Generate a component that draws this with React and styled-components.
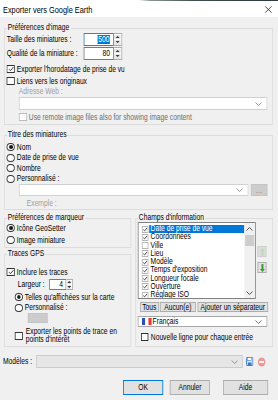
import React from 'react';
import styled, { createGlobalStyle } from 'styled-components';

/* The dialog is drawn in a horizontally condensed form (like the reference screenshot):
   layout is written in reference pixels and converted with u(), then the window is scaled by S. */
const S = 0.82;
const u = v => +(v / S).toFixed(3);

const FONT = `"Liberation Sans", Arial, sans-serif`;

const Global = createGlobalStyle`
  * { box-sizing: border-box; }
  html, body { margin: 0; padding: 0; background: #f0f0f0; overflow: hidden; }
  body { font-family: ${FONT}; font-size: 8.2px; color: #000; }
`;

const Window = styled.div`
  width: ${u(278)}px; height: 400px; display: flex; flex-direction: column;
  background: #f0f0f0; overflow: hidden;
  transform: scaleX(${S}); transform-origin: 0 0;
`;

const TopEdge = styled.div`
  height: 1px; flex: none;
  background: linear-gradient(to right, #ffffff 0%, #ffffff 50%, #8a9896 54%, #3e4c4c 70%, #2c383c 100%);
`;

const TitleBar = styled.div`
  height: 16px; flex: none; background: #fff;
  display: flex; align-items: center; justify-content: space-between;
  padding: 1px ${u(6)}px 0 ${u(3)}px; font-size: 9px; white-space: nowrap;
`;

const Body = styled.div`
  flex: 1; display: flex; flex-direction: column; padding: 0 ${u(5)}px 0 ${u(4)}px;
`;

const Group = styled.fieldset`
  margin: ${p => p.$mt || 0}px 0 0 0;
  padding: ${p => p.$pt || 0}px ${u(2)}px ${p => p.$pb || 0}px ${u(2)}px;
  border: 1px solid #dcdcdc;
  min-width: 0;
  display: flex; flex-direction: column;
  flex: ${p => (p.$grow ? '1 1 auto' : 'none')};
`;

const Legend = styled.legend`
  padding: 0 ${u(1)}px; margin: 0; height: 10px; line-height: 10px; white-space: nowrap;
`;

const Row = styled.div`
  display: flex; align-items: center; flex: none; white-space: nowrap;
  height: ${p => p.$h || 10}px;
  margin-top: ${p => p.$mt || 0}px;
  margin-left: ${p => u(p.$ml || 0)}px;
  margin-right: ${p => u(p.$mr || 0)}px;
  width: ${p => (p.$w ? `${u(p.$w)}px` : 'auto')};
  overflow: ${p => (p.$w ? 'hidden' : 'visible')};
  justify-content: ${p => p.$justify || 'flex-start'};
  color: ${p => p.$color || '#000'};
`;

const Columns = styled.div`
  display: flex; gap: ${u(4)}px; margin-top: ${p => p.$mt || 0}px; flex: none;
`;

const Column = styled.div`
  display: flex; flex-direction: column; width: ${p => u(p.$w)}px; flex: none;
`;

const FieldLabel = styled.span`
  width: ${p => u(p.$w)}px; flex: none;
  margin-left: ${p => u(p.$ml || 0)}px;
`;

const SpinWrap = styled.div`
  display: flex; height: 100%; width: ${p => u(p.$w)}px; flex: none;
`;

const SpinInput = styled.div`
  flex: 1; background: #fff;
  border: 1px solid ${p => (p.$focus ? '#3c7fc4' : '#7a7a7a')};
  display: flex; align-items: center; justify-content: flex-end; padding-right: ${u(3)}px;
`;

const Selected = styled.span`
  background: #0078d7; color: #fff; padding: 0 ${u(0.5)}px; line-height: 9px;
`;

const SpinButtons = styled.div`
  width: ${p => u(p.$w || 8)}px; flex: none; display: flex; flex-direction: column; gap: 1px;
  border: 1px solid #adadad; border-left: none; background: #fff; padding: 0.5px ${u(0.5)}px;
`;

const SpinHalf = styled.div`
  flex: 1; background: #e6e6e6; display: flex; align-items: center; justify-content: center;
`;

const Box = styled.span`
  width: ${p => u(p.$s || 8)}px; height: ${p => p.$s || 8}px; flex: none;
  border: 1px solid ${p => p.$bc || '#333'};
  background: #fff; display: inline-flex; align-items: center; justify-content: center;
  margin-right: ${p => u(p.$gap === undefined ? 2 : p.$gap)}px;
`;

const Round = styled.span`
  width: ${u(8)}px; height: 8px; flex: none; border-radius: 50%;
  border: 1px solid #333; background: #fff;
  display: inline-flex; align-items: center; justify-content: center; margin-right: ${u(2)}px;
`;

const Dot = styled.span`
  width: ${u(4)}px; height: 4px; border-radius: 50%; background: #1a1a1a;
`;

const Combo = styled.div`
  flex: ${p => (p.$w ? 'none' : '1')};
  width: ${p => (p.$w ? `${u(p.$w)}px` : 'auto')};
  height: 100%;
  background: ${p => p.$bg || '#fff'};
  border: 1px solid ${p => p.$bc || '#d0d0d0'};
  display: flex; align-items: center; justify-content: space-between;
  padding: 0 ${u(4)}px 0 ${u(3)}px;
`;

const ComboValue = styled.span`
  display: flex; align-items: center; gap: ${u(1)}px;
`;

const SmallBtn = styled.div`
  width: ${p => u(p.$w)}px; height: ${p => p.$h || 12}px; flex: none;
  margin-left: ${p => u(p.$ml || 0)}px;
  margin-right: ${p => u(p.$mr || 0)}px;
  background: ${p => p.$bg || '#e1e1e1'};
  border: 1px solid ${p => p.$bc || '#adadad'};
  color: ${p => p.$color || '#000'};
  display: flex; align-items: center; justify-content: center; white-space: nowrap;
  letter-spacing: ${p => p.$ls || 0}px;
`;

const Swatch = styled.div`
  width: ${u(20)}px; height: 10px; flex: none; margin-left: ${u(21)}px;
  background: #cccccc; border: 1px solid #c4c4c4;
`;

const WrapText = styled.span`
  white-space: normal; line-height: 8px; width: ${p => u(p.$w)}px;
`;

const ListRow = styled.div`
  display: flex; flex: none; margin-top: -1px;
`;

const ListBox = styled.div`
  width: ${u(118)}px; height: 77px; background: #fff; border: 1px solid #828282;
  display: flex; overflow: hidden; flex: none;
`;

const ListItems = styled.div`
  flex: 1; padding: 2px 0 0 ${u(3)}px; display: flex; flex-direction: column; min-width: 0;
`;

const ListItem = styled.div`
  height: 8.25px; display: flex; align-items: center; flex: none; white-space: nowrap;
`;

const ItemText = styled.span`
  flex: 1; height: 100%; line-height: 8.25px; margin-left: ${u(1)}px; padding: 0 ${u(1)}px;
  background: ${p => (p.$sel ? '#0078d7' : 'transparent')};
  color: ${p => (p.$sel ? '#fff' : '#000')};
`;

const ScrollBar = styled.div`
  width: ${u(11)}px; flex: none; background: #f0f0f0; display: flex; flex-direction: column;
`;

const ScrollArrow = styled.div`
  height: 11px; flex: none; display: flex; align-items: center; justify-content: center;
`;

const Thumb = styled.div`
  height: 11px; margin: 1px ${u(1)}px 0 ${u(1)}px; background: #cdcdcd; flex: none;
`;

const ScrollSpace = styled.div`
  flex: 1;
`;

const SideButtons = styled.div`
  display: flex; flex-direction: column; margin-left: ${u(2)}px; padding-top: 24px; gap: 5px;
`;

const ArrowBtn = styled.div`
  width: ${u(9)}px; height: 11px; display: flex; align-items: center; justify-content: center;
  background: ${p => (p.$disabled ? '#dcdcdc' : '#e1e1e1')};
  border: 1px solid ${p => (p.$disabled ? '#cfcfcf' : '#adadad')};
`;

/* svg helper: drawn at reference size, widened so the window scale brings it back */
const Icon = ({ w, h, children }) => (
  <svg width={u(w)} height={h} viewBox={`0 0 ${w} ${h}`} preserveAspectRatio="none">
    {children}
  </svg>
);

const Chevron = ({ up, color = '#606060' }) => (
  <Icon w={7} h={4}>
    <path d={up ? 'M0.5 3.5 L3.5 0.5 L6.5 3.5' : 'M0.5 0.5 L3.5 3.5 L6.5 0.5'} stroke={color} strokeWidth="0.9" fill="none" />
  </Icon>
);

const Tri = ({ up }) => (
  <Icon w={4} h={2}>
    <path d={up ? 'M0 2 L2 0 L4 2Z' : 'M0 0 L4 0 L2 2Z'} fill="#333" />
  </Icon>
);

const Check = ({ size = 6, color = '#222' }) => (
  <Icon w={size} h={size}>
    <path
      d={`M${size * 0.12} ${size * 0.52} L${size * 0.38} ${size * 0.78} L${size * 0.88} ${size * 0.18}`}
      stroke={color} strokeWidth="0.9" fill="none"
    />
  </Icon>
);

const CheckBox = ({ checked, bc, ...rest }) => (
  <Box $bc={bc} {...rest}>{checked && <Check />}</Box>
);

const Radio = ({ checked }) => <Round>{checked && <Dot />}</Round>;

const Spin = ({ w, bw, value, focus }) => (
  <SpinWrap $w={w}>
    <SpinInput $focus={focus}>{focus ? <Selected>{value}</Selected> : value}</SpinInput>
    <SpinButtons $w={bw}>
      <SpinHalf><Tri up /></SpinHalf>
      <SpinHalf><Tri /></SpinHalf>
    </SpinButtons>
  </SpinWrap>
);

const GreenArrow = ({ up, color }) => (
  <Icon w={5} h={8}>
    {up ? (
      <path d="M2.5 0 L5 3 L3.5 3 L3.5 8 L1.5 8 L1.5 3 L0 3Z" fill={color} />
    ) : (
      <path d="M2.5 8 L5 5 L3.5 5 L3.5 0 L1.5 0 L1.5 5 L0 5Z" fill={color} />
    )}
  </Icon>
);

const Flag = () => (
  <Icon w={10} h={7}>
    <rect x="0" y="0" width="3.4" height="7" fill="#2b4fb5" />
    <rect x="3.4" y="0" width="3.2" height="7" fill="#ffffff" />
    <rect x="6.6" y="0" width="3.4" height="7" fill="#e8383d" />
  </Icon>
);

const SaveIcon = () => (
  <Icon w={9} h={9}>
    <rect x="0.5" y="0.5" width="8" height="8" rx="0.8" fill="#d6e6f7" stroke="#3b76c4" />
    <rect x="2" y="0.5" width="5" height="3" fill="#ffffff" stroke="#3b76c4" strokeWidth="0.6" />
    <rect x="2.2" y="5.5" width="4.6" height="3" fill="#3b76c4" />
  </Icon>
);

const DeleteIcon = () => (
  <Icon w={10} h={10}>
    <circle cx="5" cy="5" r="4.6" fill="#eb9a9a" />
    <rect x="2.2" y="4.1" width="5.6" height="1.8" fill="#ffffff" />
  </Icon>
);

const CloseIcon = () => (
  <Icon w={7} h={7}>
    <path d="M0.3 0.3 L6.7 6.7 M6.7 0.3 L0.3 6.7" stroke="#222" strokeWidth="0.8" />
  </Icon>
);

const fields = [
  ['Date de prise de vue', true, true],
  ['Coordonnées', true],
  ['Ville', false],
  ['Lieu', true],
  ['Modèle', true],
  ["Temps d'exposition", true],
  ['Longueur focale', true],
  ['Ouverture', true],
  ['Réglage ISO', true],
];

export default function App() {
  return (
    <Window>
      <Global />
      <TopEdge />
      <TitleBar>
        <span>Exporter vers Google Earth</span>
        <CloseIcon />
      </TitleBar>
      <Body>
        <Group $mt={6} $pb={2}>
          <Legend>Préférences d'image</Legend>
          <Row $h={13}>
            <FieldLabel $w={77}>Taille des miniatures :</FieldLabel>
            <Spin w={38} value="500" focus />
          </Row>
          <Row $h={13} $mt={1}>
            <FieldLabel $w={77}>Qualité de la miniature :</FieldLabel>
            <Spin w={38} value="80" />
          </Row>
          <Row $mt={4} $w={118}>
            <CheckBox checked />
            Exporter l'horodatage de prise de vue
          </Row>
          <Row $mt={2}>
            <CheckBox />
            Liens vers les originaux
          </Row>
          <Row $ml={12} $color="#a0a0a0">Adresse Web :</Row>
          <Row $h={13} $mt={1} $ml={12} $mr={3}>
            <Combo>
              <span />
              <Chevron color="#8a8a8a" />
            </Combo>
          </Row>
          <Row $mt={2} $ml={12} $color="#6d6d6d">
            <CheckBox bc="#bcbcbc" />
            Use remote image files also for showing image content
          </Row>
        </Group>

        <Group $mt={5} $pt={2} $pb={1}>
          <Legend>Titre des miniatures</Legend>
          <Row $h={10.5}><Radio checked />Nom</Row>
          <Row $h={10.5}><Radio />Date de prise de vue</Row>
          <Row $h={10.5}><Radio />Nombre</Row>
          <Row $h={10.5}><Radio />Personnalisé :</Row>
          <Row $h={12} $ml={12} $mr={3}>
            <Combo>
              <span />
              <Chevron color="#8a8a8a" />
            </Combo>
            <SmallBtn $w={16} $h={12} $ml={3} $bg="#cccccc" $bc="#c4c4c4" $color="#8a8a8a" $ls={0.5}>...</SmallBtn>
          </Row>
          <Row $mt={2} $ml={20} $color="#a0a0a0">Exemple :</Row>
        </Group>

        <Columns $mt={3}>
          <Column $w={127}>
            <Group $pb={2}>
              <Legend>Préférences de marqueur</Legend>
              <Row><Radio checked />Icône GeoSetter</Row>
              <Row $mt={2}><Radio />Image miniature</Row>
            </Group>
            <Group $mt={1} $pb={2} $grow>
              <Legend>Traces GPS</Legend>
              <Row $mt={8}><CheckBox checked />Inclure les traces</Row>
              <Row $h={11} $mt={2} $ml={11}>
                <FieldLabel $w={31}>Largeur :</FieldLabel>
                <Spin w={24} bw={6} value="4" />
              </Row>
              <Row $h={10.5} $mt={2} $ml={8}><Radio checked />Telles qu'affichées sur la carte</Row>
              <Row $h={10.5} $ml={8}><Radio />Personnalisé :</Row>
              <Row><Swatch /></Row>
              <Row $h={16} $mt={5} $ml={8}>
                <CheckBox $gap={3} />
                <WrapText $w={100}>Exporter les points de trace en points d'intérêt</WrapText>
              </Row>
            </Group>
          </Column>
          <Column $w={138}>
            <Group $pb={4} $grow>
              <Legend>Champs d'information</Legend>
              <ListRow>
                <ListBox>
                  <ListItems>
                    {fields.map(([name, checked, sel]) => (
                      <ListItem key={name}>
                        <Box $s={7} $bc="#b5b5b5" $gap={0}>
                          {checked && <Check size={5} color="#333" />}
                        </Box>
                        <ItemText $sel={sel}>{name}</ItemText>
                      </ListItem>
                    ))}
                  </ListItems>
                  <ScrollBar>
                    <ScrollArrow><Chevron up color="#404040" /></ScrollArrow>
                    <Thumb />
                    <ScrollSpace />
                    <ScrollArrow><Chevron color="#404040" /></ScrollArrow>
                  </ScrollBar>
                </ListBox>
                <SideButtons>
                  <ArrowBtn $disabled><GreenArrow up color="#b9dcb3" /></ArrowBtn>
                  <ArrowBtn><GreenArrow color="#3e9b3a" /></ArrowBtn>
                </SideButtons>
              </ListRow>
              <Row $mt={3}>
                <SmallBtn $w={19} $h={10} $ml={2}>Tous</SmallBtn>
                <SmallBtn $w={36} $h={10} $ml={1}>Aucun(e)</SmallBtn>
                <SmallBtn $w={70} $h={10} $ml={2}>Ajouter un séparateur</SmallBtn>
              </Row>
              <Row $h={11} $mt={4} $mr={3}>
                <Combo $bc="#a8a8a8">
                  <ComboValue><Flag />Français</ComboValue>
                  <Chevron color="#606060" />
                </Combo>
              </Row>
              <Row $mt={5} $ml={3}><CheckBox />Nouvelle ligne pour chaque entrée</Row>
            </Group>
          </Column>
        </Columns>

        <Row $h={13} $mt={8}>
          <FieldLabel $w={33} $ml={-1}>Modèles :</FieldLabel>
          <Combo $w={207} $bg="#e6e6e6" $bc="#cccccc">
            <span />
            <Chevron color="#8a8a8a" />
          </Combo>
          <SmallBtn $w={9} $h={9} $ml={2} $bg="transparent" $bc="transparent"><SaveIcon /></SmallBtn>
          <SmallBtn $w={10} $h={10} $ml={3} $bg="transparent" $bc="transparent"><DeleteIcon /></SmallBtn>
        </Row>

        <Row $h={15} $mt={12} $justify="flex-end">
          <SmallBtn $w={40} $h={15} $bc="#0078d7">OK</SmallBtn>
          <SmallBtn $w={40} $h={15} $ml={7}>Annuler</SmallBtn>
          <SmallBtn $w={45} $h={15} $ml={13} $mr={5}>Aide</SmallBtn>
        </Row>
      </Body>
    </Window>
  );
}
